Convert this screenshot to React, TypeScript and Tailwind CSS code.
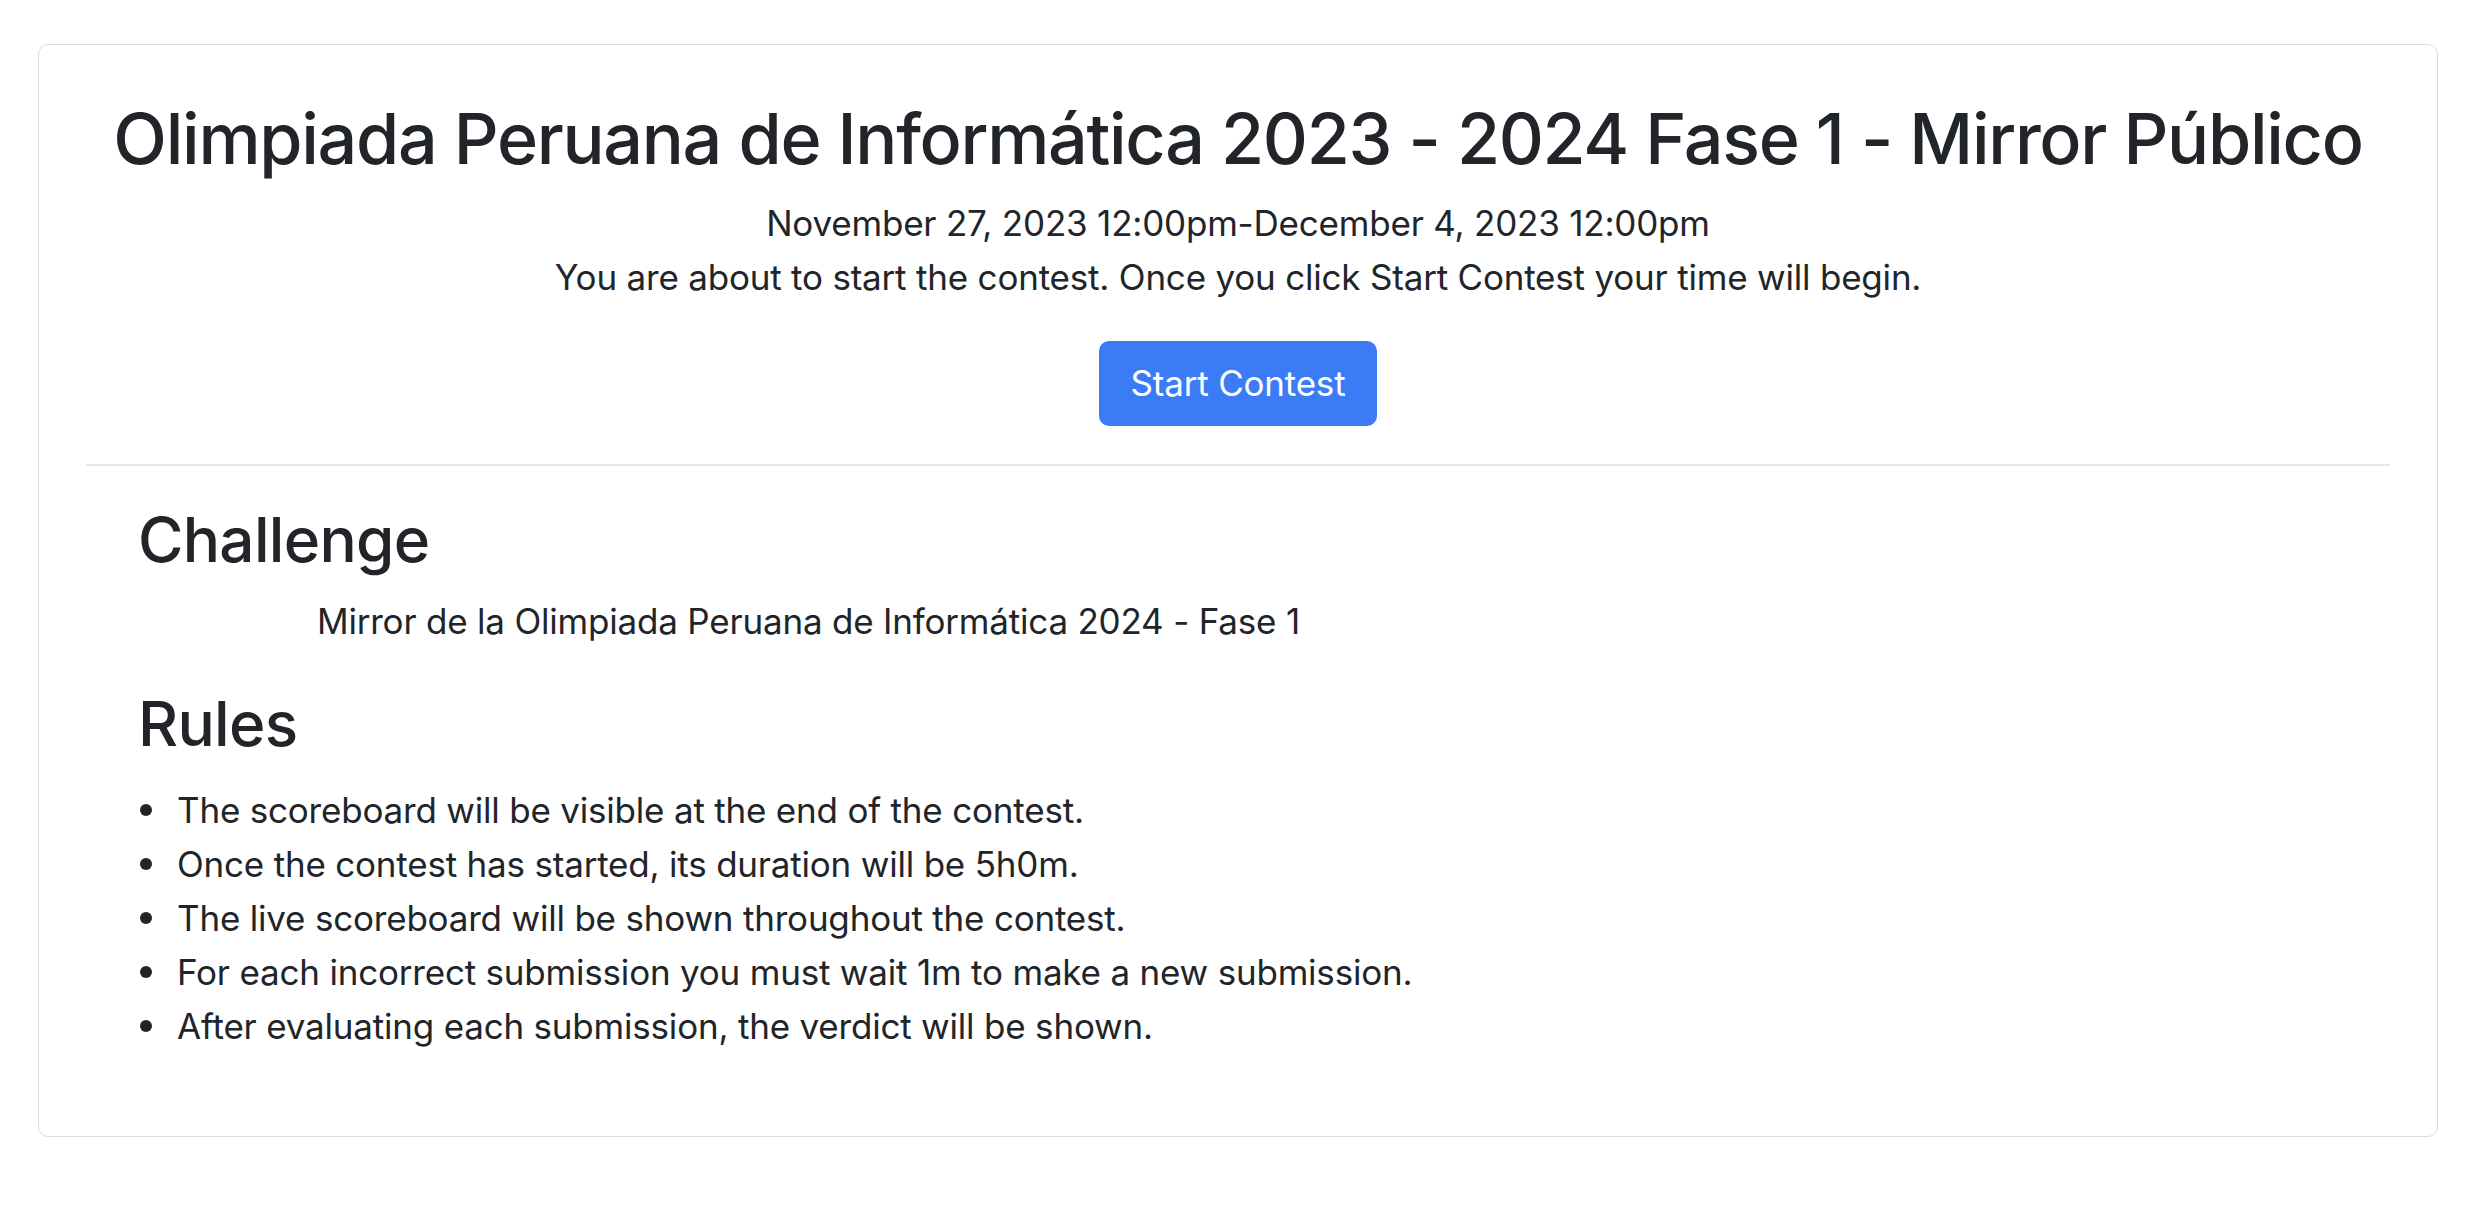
const rules = [
  'The scoreboard will be visible at the end of the contest.',
  'Once the contest has started, its duration will be 5h0m.',
  'The live scoreboard will be shown throughout the contest.',
  'For each incorrect submission you must wait 1m to make a new submission.',
  'After evaluating each submission, the verdict will be shown.',
];

export default function App() {
  return (
    <div className="min-h-screen bg-white pt-[44px] pl-[38px] text-[#212529] font-['Inter','Liberation_Sans',sans-serif]">
      <div className="w-[2400px] h-[1093px] rounded-[10px] border border-[#dcdcdc] px-[47px] pt-[52px]">
        <div className="text-center">
          <h1 className="text-[70px] leading-[1.2] font-medium tracking-[-1.3px] whitespace-nowrap">
            Olimpiada Peruana de Informática 2023 - 2024 Fase 1 - Mirror Público
          </h1>
          <p className="mt-[15px] text-[35px] leading-[54px] tracking-[-0.2px]">
            November 27, 2023 12:00pm-December 4, 2023 12:00pm
          </p>
          <p className="text-[35px] leading-[54px] tracking-[-0.2px]">
            You are about to start the contest. Once you click Start Contest your time will begin.
          </p>
          <button className="mt-[37px] h-[85px] w-[278px] rounded-[10px] bg-[#3b7cf6] text-[35px] tracking-[-0.2px] text-white">
            Start Contest
          </button>
        </div>
        <div className="mt-[38px] h-[2px] bg-[#e5e5e5]" />
        <div className="pl-[52px]">
          <h2 className="mt-[37px] text-[62px] leading-[1.2] font-medium tracking-[-0.7px]">Challenge</h2>
          <p className="mt-[17px] pl-[179px] text-[35px] leading-[54px] tracking-[-0.2px]">
            Mirror de la Olimpiada Peruana de Informática 2024 - Fase 1
          </p>
          <h2 className="mt-[39px] text-[62px] leading-[1.2] font-medium tracking-[-0.7px]">Rules</h2>
          <ul className="mt-[21px] text-[35px] leading-[54px] tracking-[-0.2px]">
            {rules.map((r) => (
              <li key={r} className="flex items-center">
                <span className="ml-[2px] mr-[25px] h-[12px] w-[12px] shrink-0 rounded-full bg-[#212529]" />
                <span>{r}</span>
              </li>
            ))}
          </ul>
        </div>
      </div>
    </div>
  );
}
